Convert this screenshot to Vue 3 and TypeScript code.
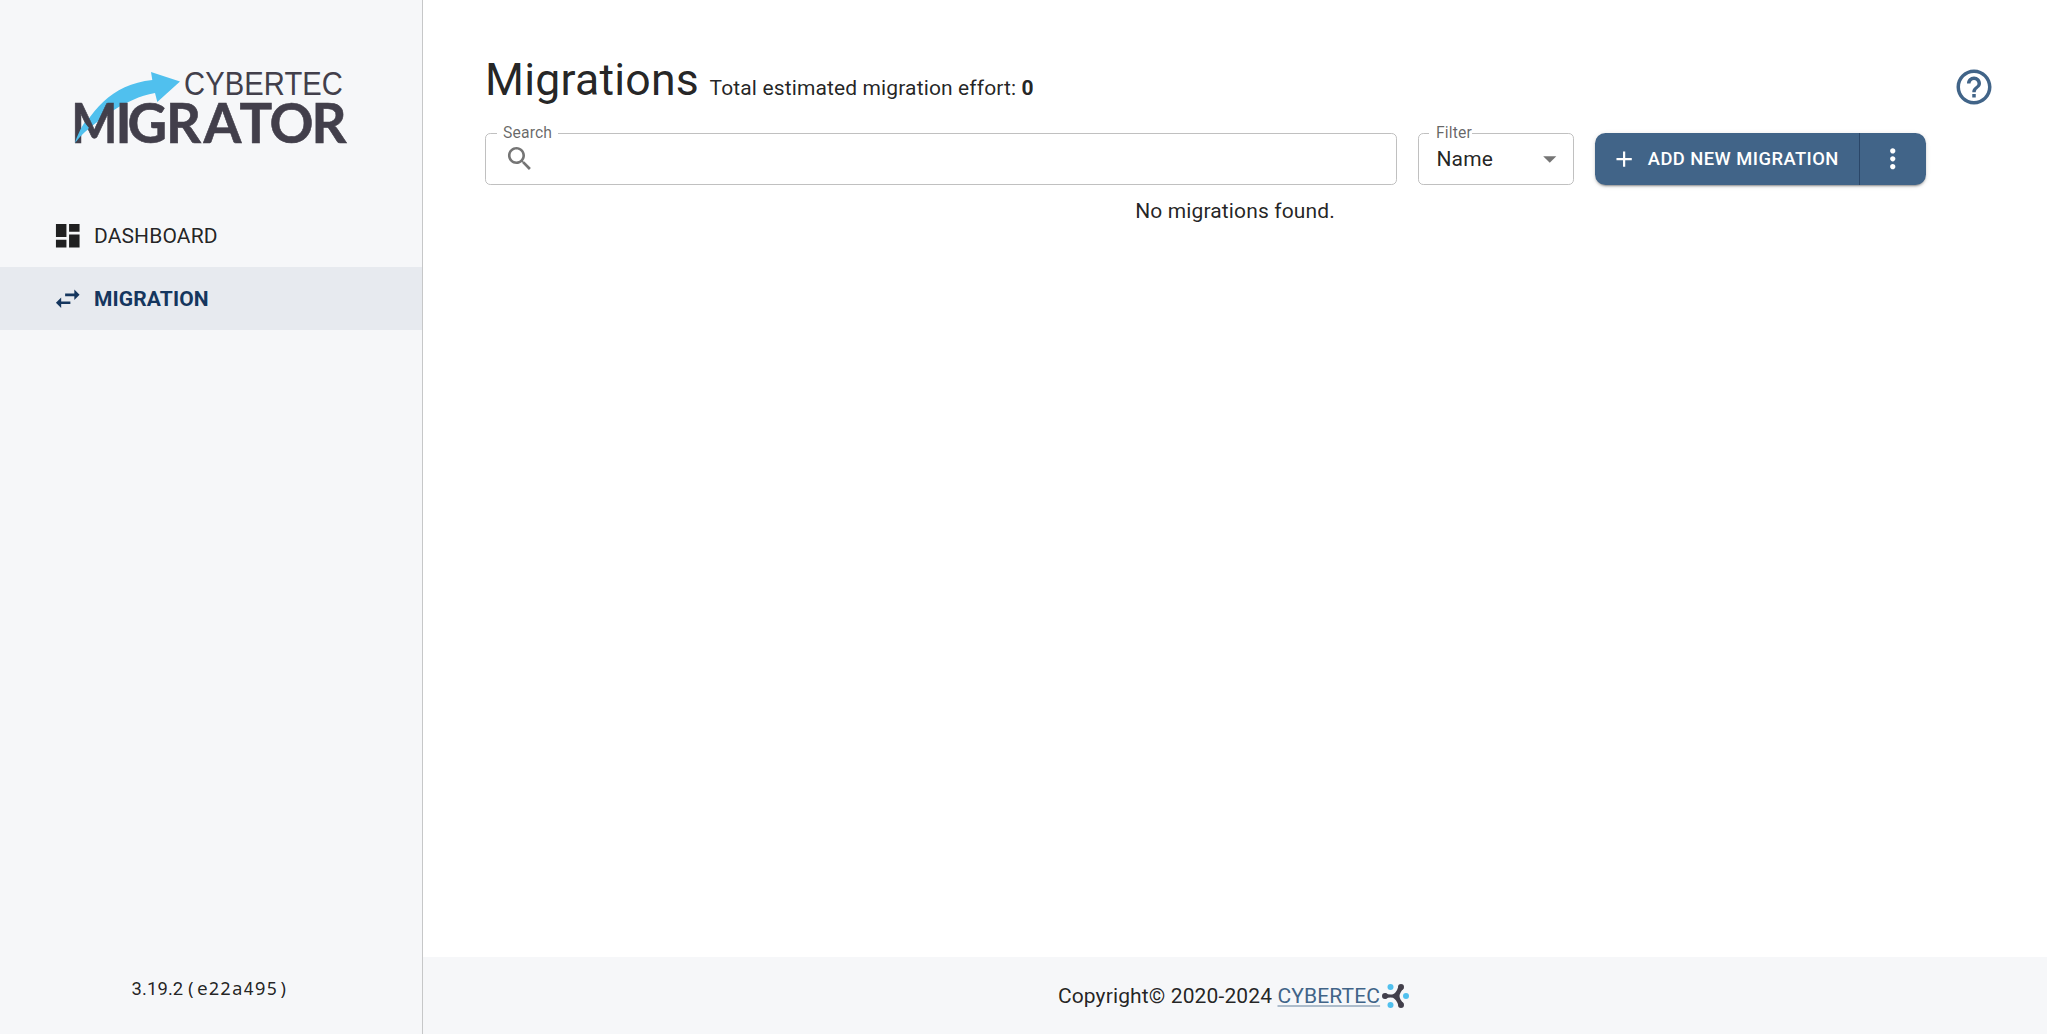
<script setup lang="ts">
const navItems = [
  {
    label: 'Dashboard',
    icon: 'M3 13h8V3H3v10zm0 8h8v-6H3v6zm10 0h8V11h-8v10zm0-18v6h8V3h-8z',
    active: false,
  },
  {
    label: 'Migration',
    icon: 'M6.99 11L3 15l3.99 4v-3H14v-2H6.99v-3zM21 9l-3.99-4v3H10v2h7.01v3L21 9z',
    active: true,
  },
]
const effort = 0
</script>

<template>
  <div class="app">
    <aside class="sidebar">
      <svg class="logo" viewBox="0 0 300 95" role="img" aria-label="Cybertec Migrator">
        <path class="logo-arrow" d="M15 83C29 53 51 24 92.3 20L91 12 120 21.5 97.3 42 95 33C79 36 67 42 54 50 43 57 32 66 26 71 21 75 18 79 15 83Z" />
        <text class="logo-brand" x="124" y="34.8" textLength="159" lengthAdjust="spacingAndGlyphs">CYBERTEC</text>
        <text class="logo-product" y="83"><tspan x="11.3" textLength="46.2" lengthAdjust="spacingAndGlyphs">M</tspan><tspan x="55.6 67.5 106 143.6 179.5 209.4 251.6">IGRATOR</tspan></text>
        <path class="logo-arrow" d="M15 83C17 76 21 68 24.5 62.5L29 68C23 73 19 78 15 83Z" />
      </svg>
      <nav class="nav">
        <a v-for="item in navItems" :key="item.label" class="nav-item" :class="{ active: item.active }">
          <svg class="nav-icon" viewBox="0 0 24 24"><path :d="item.icon" /></svg>
          <span>{{ item.label }}</span>
        </a>
      </nav>
      <div class="version">3.19.2<code>(e22a495)</code></div>
    </aside>

    <div class="content">
      <main class="main">
        <section class="panel">
          <header class="heading">
            <h1>Migrations</h1>
            <span class="effort">Total estimated migration effort: <b>{{ effort }}</b></span>
          </header>
          <div class="toolbar">
            <fieldset class="field search">
              <legend>Search</legend>
              <svg class="search-icon" viewBox="0 0 24 24">
                <path d="M15.5 14h-.79l-.28-.27C15.41 12.59 16 11.11 16 9.5 16 5.91 13.09 3 9.5 3S3 5.91 3 9.5 5.91 16 9.5 16c1.61 0 3.09-.59 4.23-1.57l.27.28v.79l5 4.99L20.49 19l-4.99-5zm-6 0C7.01 14 5 11.99 5 9.5S7.01 5 9.5 5 14 7.01 14 9.5 11.99 14 9.5 14z" />
              </svg>
            </fieldset>
            <fieldset class="field filter">
              <legend>Filter</legend>
              <span>Name</span>
              <svg class="caret" viewBox="0 0 24 24"><path d="M7 10l5 5 5-5z" /></svg>
            </fieldset>
            <div class="button-group">
              <button class="add" type="button">
                <svg class="plus" viewBox="0 0 24 24"><path d="M19 13h-6v6h-2v-6H5v-2h6V5h2v6h6v2z" /></svg>
                <span>Add new migration</span>
              </button>
              <button class="more" type="button" aria-label="More">
                <svg viewBox="0 0 24 24"><path d="M12 8c1.1 0 2-.9 2-2s-.9-2-2-2-2 .9-2 2 .9 2 2 2zm0 2c-1.1 0-2 .9-2 2s.9 2 2 2 2-.9 2-2-.9-2-2-2zm0 6c-1.1 0-2 .9-2 2s.9 2 2 2 2-.9 2-2-.9-2-2-2z" /></svg>
              </button>
            </div>
          </div>
          <p class="empty">No migrations found.</p>
        </section>
        <svg class="help" viewBox="0 0 24 24">
          <path d="M11 18h2v-2h-2v2zm1-16C6.48 2 2 6.48 2 12s4.48 10 10 10 10-4.48 10-10S17.52 2 12 2zm0 18c-4.41 0-8-3.59-8-8s3.59-8 8-8 8 3.59 8 8-3.59 8-8 8zm0-14c-2.21 0-4 1.79-4 4h2c0-1.1.9-2 2-2s2 .9 2 2c0 2-3 1.75-3 5h2c0-2.25 3-2.5 3-5 0-2.21-1.79-4-4-4z" />
        </svg>
      </main>
      <footer class="footer">
        <span>Copyright© 2020-2024&nbsp;</span>
        <a>CYBERTEC</a>
        <svg class="mark" viewBox="0 0 28 26">
          <path class="mark-ends" d="M4 13H4.01M20 4V4.01M20 22V21.99" />
          <path class="mark-core" d="M4 10.2Q8 12.2 12 11.3 15.5 9.5 17.2 4L22.5 5.5Q18.5 10 18.5 13T22.5 20.5L17.2 22Q15.5 16.5 12 14.7 8 13.8 4 15.8Z" />
          <g class="mark-dots"><circle cx="9.5" cy="4" r="3" /><circle cx="9.5" cy="22" r="3" /><circle cx="25" cy="13" r="3" /></g>
        </svg>
      </footer>
    </div>
  </div>
</template>

<style>
body {
  margin: 0;
  background: #fff;
}
</style>

<style scoped>
.app {
  display: flex;
  height: 100vh;
  font: 400 21px/1.5 Roboto, sans-serif;
  letter-spacing: 0.13px;
  color: rgba(0, 0, 0, 0.87);
}
.sidebar {
  box-sizing: border-box;
  width: 423px;
  flex: none;
  display: flex;
  flex-direction: column;
  background: #f6f7f9;
  border-right: 1px solid #c6c7c8;
}
.logo {
  display: block;
  width: 300px;
  height: 95px;
  margin: 60px 0 49px 60px;
  overflow: visible;
}
.logo-brand {
  font: 400 32.5px "Liberation Sans", sans-serif;
  fill: #423f4b;
}
.logo-product {
  font: 700 54.5px Lato, sans-serif;
  letter-spacing: 0;
  fill: #423f4b;
  stroke: #423f4b;
  stroke-width: 0.6px;
}
.logo-arrow {
  fill: #50c0ee;
}
.nav-item {
  display: flex;
  align-items: center;
  gap: 10.5px;
  height: 63px;
  padding-left: 52px;
  text-transform: uppercase;
}
.nav-item span {
  padding-top: 2px;
}
.nav-item.active {
  background: #e7eaef;
  color: #15365e;
  font-weight: 700;
}
.nav-icon {
  width: 31.5px;
  height: 31.5px;
  fill: currentColor;
}
.version {
  margin: auto 0 29px 131.5px;
  font-size: 18.4px;
  line-height: 32px;
}
.version code {
  margin-left: 2px;
  font: 18px/32px "Noto Sans Mono", "DejaVu Sans Mono", monospace;
  letter-spacing: 0.78px;
}
.content {
  flex: 1;
  display: flex;
  flex-direction: column;
}
.main {
  flex: 1;
  display: flex;
  align-items: flex-start;
  padding: 47px 0 0 62px;
}
.panel {
  width: 1441px;
}
.heading {
  display: flex;
  align-items: baseline;
  gap: 10.5px;
  height: 75px;
}
h1 {
  margin: 0;
  font-size: 44.6px;
  font-weight: 400;
  line-height: 66px;
  letter-spacing: 0.22px;
}
.toolbar {
  display: flex;
  gap: 21px;
  align-items: flex-end;
  height: 63px;
}
.field {
  box-sizing: border-box;
  height: 63px;
  min-width: 0;
  margin: 0;
  border: 1px solid #c0c0c0;
  border-radius: 5.25px;
  display: flex;
  align-items: center;
}
.field legend {
  padding: 0 6px;
  height: 22px;
  font-size: 15.75px;
  line-height: 22px;
  color: rgba(0, 0, 0, 0.6);
}
.search {
  flex: 1;
  padding: 0 10px 10px 11px;
}
.search-icon {
  width: 31.5px;
  height: 31.5px;
  margin-left: 7px;
  fill: #757575;
}
.filter {
  width: 156px;
  justify-content: space-between;
  padding: 0 8px 10px 10px;
}
.field.filter legend {
  padding: 0 0 0 7px;
}
.filter span {
  margin-left: 7.5px;
  padding-top: 2px;
}
.filter .caret {
  width: 31.5px;
  height: 31.5px;
  fill: #757575;
}
.button-group {
  display: flex;
  width: 331px;
  height: 52px;
  border-radius: 10.5px;
  background: #416488;
  box-shadow: 0 3px 1px -2px rgba(0, 0, 0, 0.2), 0 2px 2px rgba(0, 0, 0, 0.14), 0 1px 5px rgba(0, 0, 0, 0.12);
}
button {
  display: flex;
  align-items: center;
  padding: 0;
  border: 0;
  background: none;
  color: #fff;
  font: 500 18.375px/1.75 Roboto, sans-serif;
  letter-spacing: 0.46px;
  text-transform: uppercase;
}
button svg {
  fill: currentColor;
}
.add {
  box-sizing: border-box;
  width: 265px;
  padding-left: 16px;
  border-right: 1px solid #2a4668;
  gap: 10.5px;
  white-space: nowrap;
}
.plus {
  width: 26.25px;
  height: 26.25px;
  flex: none;
}
.more {
  flex: 1;
  justify-content: center;
}
.more svg {
  width: 31.5px;
  height: 31.5px;
}
.empty {
  margin: 11px 0 0 59px;
  text-align: center;
}
.help {
  width: 42px;
  height: 42px;
  margin: 19px 0 0 27px;
  fill: #416488;
}
.footer {
  display: flex;
  align-items: center;
  justify-content: center;
  height: 77px;
  padding-right: 3px;
  background: #f6f7f9;
}
.footer span,
.footer a {
  padding-top: 2px;
}
.footer a {
  color: #416488;
  text-decoration: underline;
  text-decoration-color: rgba(65, 100, 136, 0.4);
}
.mark {
  width: 28px;
  height: 26px;
  margin-left: 1px;
}
.mark-ends {
  fill: none;
  stroke: #423f4b;
  stroke-width: 6;
  stroke-linecap: round;
}
.mark-core {
  fill: #423f4b;
}
.mark-dots {
  fill: #50c0ee;
}
</style>
